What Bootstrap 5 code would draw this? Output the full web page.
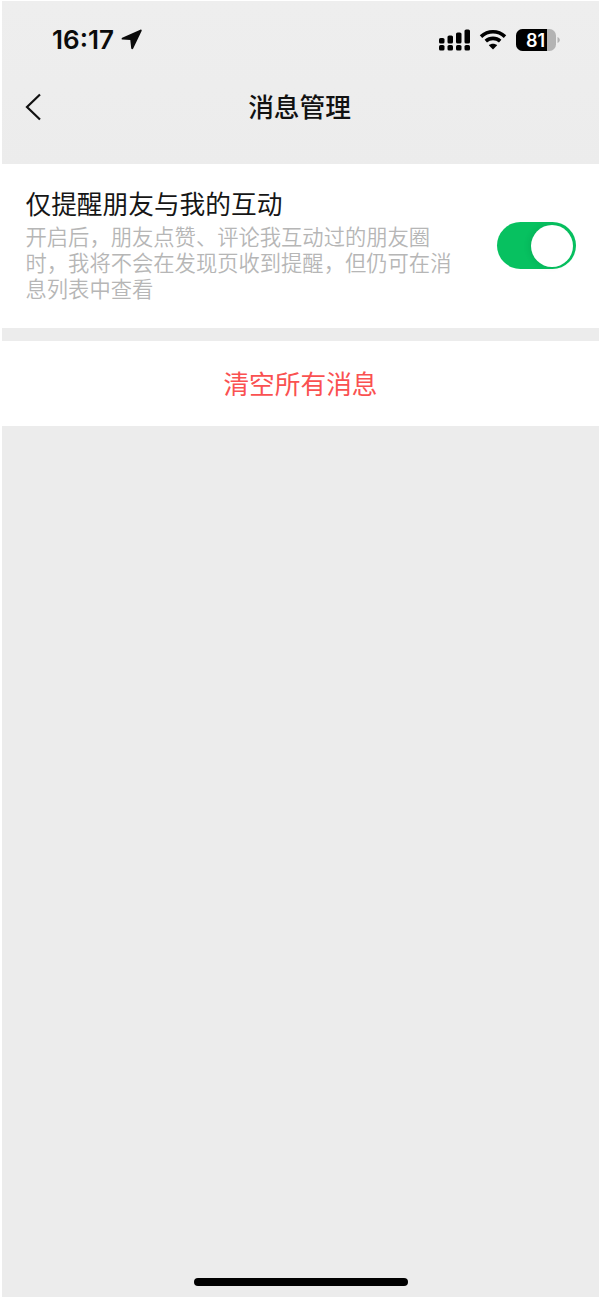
<!DOCTYPE html>
<html lang="zh-CN">
<head>
<meta charset="utf-8">
<title>消息管理</title>
<link href="https://cdn.jsdelivr.net/npm/bootstrap@5.3.0/dist/css/bootstrap.min.css" rel="stylesheet">
<style>
html,body{height:100%;margin:0;background:#fff}
body{font-family:"Noto Sans CJK SC","Liberation Sans",sans-serif;overflow:hidden}
.screen{width:600px;height:1298px;background:linear-gradient(#eeeeee,#ececec 170px);border-style:solid;border-color:#fff;border-width:1px 1px 1px 2px;margin:0}
.statusbar{height:77px;padding:0 39px 0 50px}
.clock{font-family:Inter,"Liberation Sans",sans-serif;font-weight:600;font-size:26px;line-height:1;color:#0b0b0b}
.arrow-icon{margin-left:7px}
.batt-icon{margin-left:9px}
.topnav{height:56px;padding:0 26px 0 24px;position:relative}
.nav-heading{font-size:25.7px;line-height:1;font-weight:500;color:#111;margin:0 auto}
.nav-back{position:absolute;left:23px;top:15px}
.spacer-top{height:30px}
.setting-row{background:#fff;margin:0 -2px 0 -2px;height:164px;padding:24px 25px 0 25.500px}
.setting-title{font-size:25.7px;line-height:30px;color:#161616}
.setting-desc{font-size:21.3px;line-height:25.8px;color:#b6b6b6;margin-top:5px;width:426px;font-weight:350}
.switcher{width:79px;height:47px;border-radius:24px;background:#07c160;margin-top:34px;position:relative;flex:none}
.switcher-knob{position:absolute;right:3px;top:3px;width:42px;height:42px;border-radius:50%;background:#fff;box-shadow:-2px 0 6px rgba(0,0,0,.08)}
.danger-row{background:#fff;margin:13px -2px 0 -2px;height:85px;font-size:25.7px;color:#fa5151;line-height:1;padding-bottom:2px}
.home-bar{width:214px;height:8px;border-radius:4px;background:#000;position:absolute;left:191.500px;top:1277px}
</style>
</head>
<body>
<div class="screen d-flex flex-column position-relative">
  <div class="statusbar d-flex align-items-center justify-content-between">
    <div class="d-flex align-items-center">
      <span class="clock">16:17</span>
      <svg class="arrow-icon" width="21" height="21" viewBox="0 0 21 21"><path d="M19.300.7 1.200 8.800c-1 .5-.7 1.800.4 1.800l7.700.3.900 8.300c.2 1.100 1.500 1.300 2 .4l8.400-17.500c.5-1-.3-1.900-1.300-1.400z" fill="#0b0b0b"/></svg>
    </div>
    <div class="d-flex align-items-center">
      <svg width="32" height="22" viewBox="0 0 32 22" fill="#000">
        <rect x="0" y="9" width="5.500" height="5.500" rx="1.600"/><rect x="0" y="16" width="5.500" height="5.500" rx="1.600"/>
        <rect x="8.500" y="6.500" width="5.500" height="8" rx="1.600"/><rect x="8.500" y="16" width="5.500" height="5.500" rx="1.600"/>
        <rect x="17" y="3.500" width="5.500" height="11" rx="1.600"/><rect x="17" y="16" width="5.500" height="5.500" rx="1.600"/>
        <rect x="25.500" y="0.500" width="5.500" height="14" rx="1.600"/><rect x="25.500" y="16" width="5.500" height="5.500" rx="1.600"/>
      </svg>
      <svg class="ms-2" width="28" height="21" viewBox="0 0 28 21" fill="none" stroke="#000" stroke-width="3.600">
        <path d="M2 7.600C9 1.200 19 1.200 26 7.600"/><path d="M6.800 12.200c4.200-3.800 10.200-3.800 14.400 0"/><path d="M14 20.500l-4.200-4.300c2.400-2 6-2 8.400 0z" fill="#000" stroke="none"/>
      </svg>
      <svg class="batt-icon" width="44" height="22" viewBox="0 0 44 22">
        <rect x="0" y="0" width="40" height="22" rx="6.500" fill="#b3b3b3"/>
        <path d="M6.500 0H31V22H6.500A6.500 6.500 0 0 1 0 15.500V6.500A6.500 6.500 0 0 1 6.500 0z" fill="#000"/>
        <path d="M41.500 8v6c1.300-.4 2.300-1.700 2.300-3s-1-2.600-2.300-3z" fill="#b3b3b3"/>
        <text x="19.500" y="17.500" text-anchor="middle" font-family="Inter,Liberation Sans,sans-serif" font-size="18" font-weight="600" fill="#fff">81</text>
      </svg>
    </div>
  </div>
  <div class="topnav d-flex align-items-center">
    <svg class="nav-back" width="18" height="28" viewBox="0 0 18 28" fill="none" stroke="#111" stroke-width="2.200"><path d="M15 1.500 2 14l13 12.500"/></svg>
    <h1 class="nav-heading">消息管理</h1>
  </div>
  <div class="spacer-top"></div>
  <div class="setting-row d-flex justify-content-between">
    <div>
      <div class="setting-title">仅提醒朋友与我的互动</div>
      <div class="setting-desc">开启后，朋友点赞、评论我互动过的朋友圈时，我将不会在发现页收到提醒，但仍可在消息列表中查看</div>
    </div>
    <div class="switcher"><div class="switcher-knob"></div></div>
  </div>
  <div class="danger-row d-flex align-items-center justify-content-center">清空所有消息</div>
  <div class="home-bar"></div>
</div>
<script src="https://cdn.jsdelivr.net/npm/bootstrap@5.3.0/dist/js/bootstrap.bundle.min.js"></script>
</body>
</html>
